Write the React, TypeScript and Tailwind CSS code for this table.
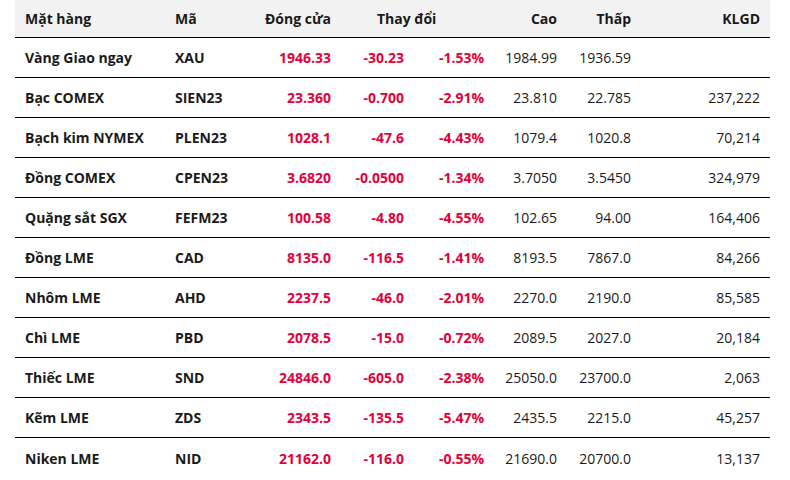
import React from "react";

type Row = [string, string, string, string, string, string, string, string];

const rows: Row[] = [
  ["Vàng Giao ngay", "XAU", "1946.33", "-30.23", "-1.53%", "1984.99", "1936.59", ""],
  ["Bạc COMEX", "SIEN23", "23.360", "-0.700", "-2.91%", "23.810", "22.785", "237,222"],
  ["Bạch kim NYMEX", "PLEN23", "1028.1", "-47.6", "-4.43%", "1079.4", "1020.8", "70,214"],
  ["Đồng COMEX", "CPEN23", "3.6820", "-0.0500", "-1.34%", "3.7050", "3.5450", "324,979"],
  ["Quặng sắt SGX", "FEFM23", "100.58", "-4.80", "-4.55%", "102.65", "94.00", "164,406"],
  ["Đồng LME", "CAD", "8135.0", "-116.5", "-1.41%", "8193.5", "7867.0", "84,266"],
  ["Nhôm LME", "AHD", "2237.5", "-46.0", "-2.01%", "2270.0", "2190.0", "85,585"],
  ["Chì LME", "PBD", "2078.5", "-15.0", "-0.72%", "2089.5", "2027.0", "20,184"],
  ["Thiếc LME", "SND", "24846.0", "-605.0", "-2.38%", "25050.0", "23700.0", "2,063"],
  ["Kẽm LME", "ZDS", "2343.5", "-135.5", "-5.47%", "2435.5", "2215.0", "45,257"],
  ["Niken LME", "NID", "21162.0", "-116.0", "-0.55%", "21690.0", "20700.0", "13,137"],
];

const grid =
  "grid grid-cols-[150px_94px_82px_73px_80px_73px_74px_129px] items-center";

export default function App() {
  return (
    <div
      className="w-[790px] h-[480px] bg-white text-[14px] text-[#1a1a1a] overflow-hidden"
      style={{ fontFamily: '"Open Sans", "Noto Sans", sans-serif' }}
    >
      <div className="ml-[15px] w-[755px]">
        <div className={`${grid} h-[38px] bg-[#f2f2f2] border-b border-black font-bold`}>
          <div className="pl-[10px]">Mặt hàng</div>
          <div className="pl-[10px]">Mã</div>
          <div className="pr-[10px] text-right">Đóng cửa</div>
          <div className="col-span-2 pl-[36px]">Thay đổi</div>
          <div className="pr-[10px] text-right">Cao</div>
          <div className="pr-[10px] text-right">Thấp</div>
          <div className="pr-[10px] text-right">KLGD</div>
        </div>
        {rows.map((r, i) => (
          <div
            key={r[1]}
            className={`${grid} h-[40px] ${i < rows.length - 1 ? "border-b border-black" : ""}`}
          >
            <div className="pl-[10px] font-bold">{r[0]}</div>
            <div className="pl-[10px] font-bold">{r[1]}</div>
            <div className="pr-[10px] text-right font-bold text-[#e4003a]">{r[2]}</div>
            <div className="pr-[10px] text-right font-bold text-[#e4003a]">{r[3]}</div>
            <div className="pr-[10px] text-right font-bold text-[#e4003a]">{r[4]}</div>
            <div className="pr-[10px] text-right">{r[5]}</div>
            <div className="pr-[10px] text-right">{r[6]}</div>
            <div className="pr-[10px] text-right">{r[7]}</div>
          </div>
        ))}
      </div>
    </div>
  );
}
